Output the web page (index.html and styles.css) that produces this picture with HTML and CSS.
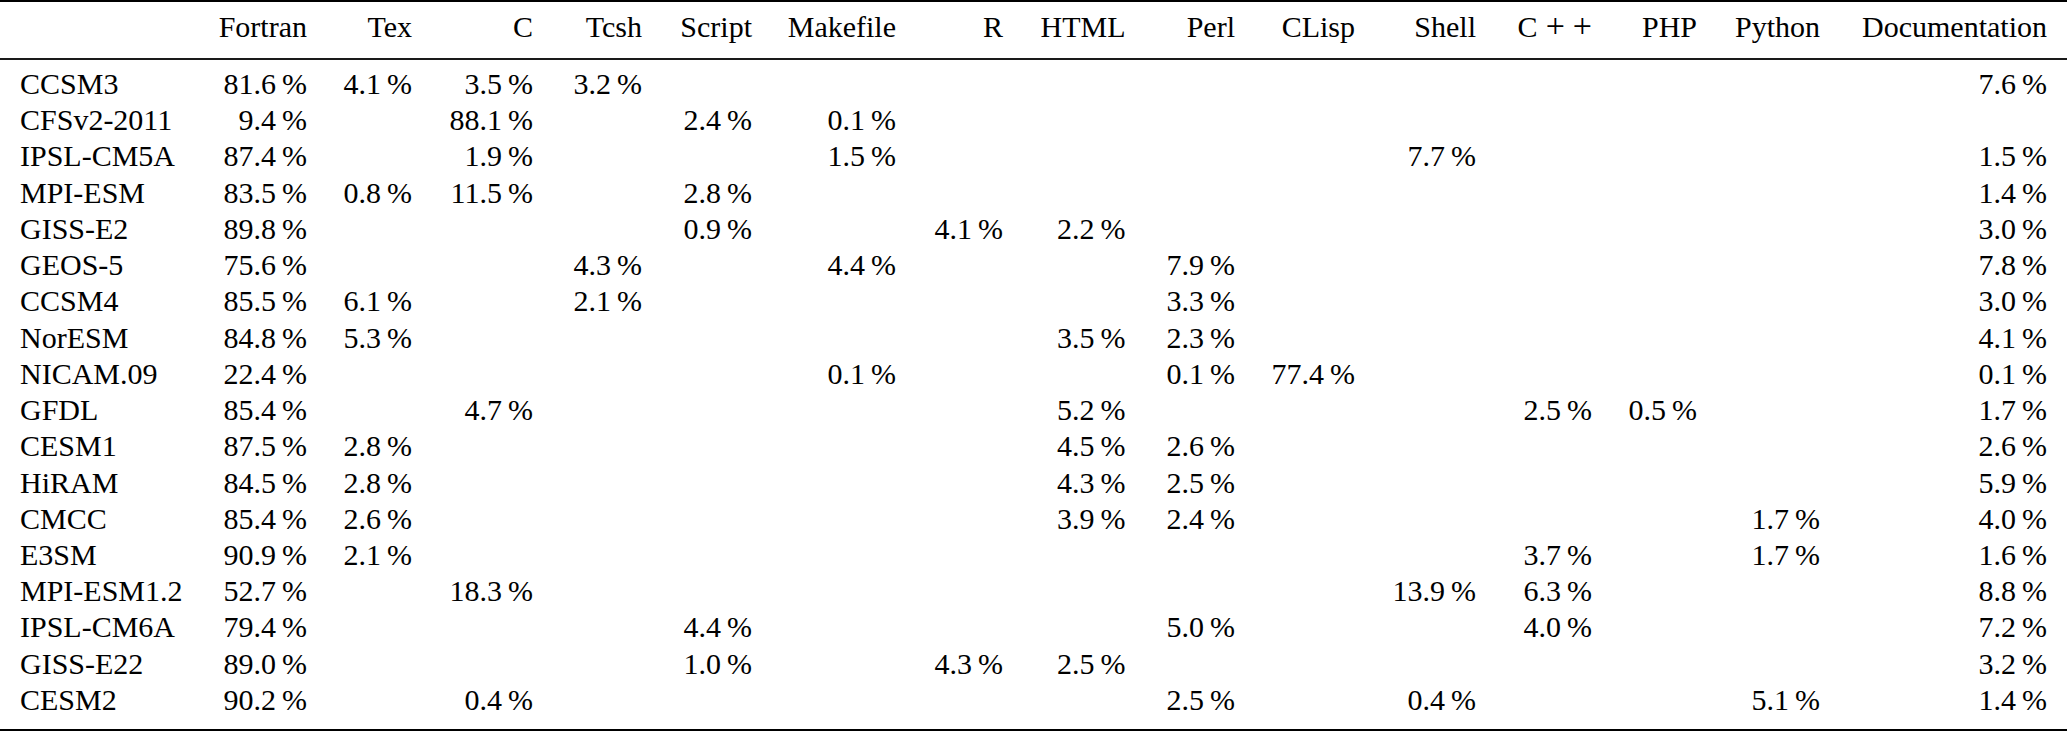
FILE: index.html
```html
<!DOCTYPE html>
<html lang="en">
<head>
<meta charset="utf-8">
<title>Language composition of climate models</title>
<link rel="stylesheet" href="styles.css">
</head>
<body>
<table class="langs">
  <colgroup>
    <col class="w-name">
    <col class="w-fortran">
    <col class="w-tex">
    <col class="w-c">
    <col class="w-tcsh">
    <col class="w-script">
    <col class="w-make">
    <col class="w-r">
    <col class="w-html">
    <col class="w-perl">
    <col class="w-clisp">
    <col class="w-shell">
    <col class="w-cpp">
    <col class="w-php">
    <col class="w-python">
    <col class="w-doc">
  </colgroup>
  <thead>
    <tr>
      <th class="name"></th>
      <th>Fortran</th>
      <th>Tex</th>
      <th>C</th>
      <th>Tcsh</th>
      <th>Script</th>
      <th>Makefile</th>
      <th>R</th>
      <th>HTML</th>
      <th>Perl</th>
      <th>CLisp</th>
      <th>Shell</th>
      <th><span class="cpp">C<span class="plus">+</span><span class="plus">+</span></span></th>
      <th>PHP</th>
      <th>Python</th>
      <th class="last">Documentation</th>
    </tr>
  </thead>
  <tbody>
    <tr><td class="name">CCSM3</td><td>81.6&thinsp;%</td><td>4.1&thinsp;%</td><td>3.5&thinsp;%</td><td>3.2&thinsp;%</td><td></td><td></td><td></td><td></td><td></td><td></td><td></td><td></td><td></td><td></td><td class="last">7.6&thinsp;%</td></tr>
    <tr><td class="name">CFSv2-2011</td><td>9.4&thinsp;%</td><td></td><td>88.1&thinsp;%</td><td></td><td>2.4&thinsp;%</td><td>0.1&thinsp;%</td><td></td><td></td><td></td><td></td><td></td><td></td><td></td><td></td><td class="last"></td></tr>
    <tr><td class="name">IPSL-CM5A</td><td>87.4&thinsp;%</td><td></td><td>1.9&thinsp;%</td><td></td><td></td><td>1.5&thinsp;%</td><td></td><td></td><td></td><td></td><td>7.7&thinsp;%</td><td></td><td></td><td></td><td class="last">1.5&thinsp;%</td></tr>
    <tr><td class="name">MPI-ESM</td><td>83.5&thinsp;%</td><td>0.8&thinsp;%</td><td>11.5&thinsp;%</td><td></td><td>2.8&thinsp;%</td><td></td><td></td><td></td><td></td><td></td><td></td><td></td><td></td><td></td><td class="last">1.4&thinsp;%</td></tr>
    <tr><td class="name">GISS-E2</td><td>89.8&thinsp;%</td><td></td><td></td><td></td><td>0.9&thinsp;%</td><td></td><td>4.1&thinsp;%</td><td>2.2&thinsp;%</td><td></td><td></td><td></td><td></td><td></td><td></td><td class="last">3.0&thinsp;%</td></tr>
    <tr><td class="name">GEOS-5</td><td>75.6&thinsp;%</td><td></td><td></td><td>4.3&thinsp;%</td><td></td><td>4.4&thinsp;%</td><td></td><td></td><td>7.9&thinsp;%</td><td></td><td></td><td></td><td></td><td></td><td class="last">7.8&thinsp;%</td></tr>
    <tr><td class="name">CCSM4</td><td>85.5&thinsp;%</td><td>6.1&thinsp;%</td><td></td><td>2.1&thinsp;%</td><td></td><td></td><td></td><td></td><td>3.3&thinsp;%</td><td></td><td></td><td></td><td></td><td></td><td class="last">3.0&thinsp;%</td></tr>
    <tr><td class="name">NorESM</td><td>84.8&thinsp;%</td><td>5.3&thinsp;%</td><td></td><td></td><td></td><td></td><td></td><td>3.5&thinsp;%</td><td>2.3&thinsp;%</td><td></td><td></td><td></td><td></td><td></td><td class="last">4.1&thinsp;%</td></tr>
    <tr><td class="name">NICAM.09</td><td>22.4&thinsp;%</td><td></td><td></td><td></td><td></td><td>0.1&thinsp;%</td><td></td><td></td><td>0.1&thinsp;%</td><td>77.4&thinsp;%</td><td></td><td></td><td></td><td></td><td class="last">0.1&thinsp;%</td></tr>
    <tr><td class="name">GFDL</td><td>85.4&thinsp;%</td><td></td><td>4.7&thinsp;%</td><td></td><td></td><td></td><td></td><td>5.2&thinsp;%</td><td></td><td></td><td></td><td>2.5&thinsp;%</td><td>0.5&thinsp;%</td><td></td><td class="last">1.7&thinsp;%</td></tr>
    <tr><td class="name">CESM1</td><td>87.5&thinsp;%</td><td>2.8&thinsp;%</td><td></td><td></td><td></td><td></td><td></td><td>4.5&thinsp;%</td><td>2.6&thinsp;%</td><td></td><td></td><td></td><td></td><td></td><td class="last">2.6&thinsp;%</td></tr>
    <tr><td class="name">HiRAM</td><td>84.5&thinsp;%</td><td>2.8&thinsp;%</td><td></td><td></td><td></td><td></td><td></td><td>4.3&thinsp;%</td><td>2.5&thinsp;%</td><td></td><td></td><td></td><td></td><td></td><td class="last">5.9&thinsp;%</td></tr>
    <tr><td class="name">CMCC</td><td>85.4&thinsp;%</td><td>2.6&thinsp;%</td><td></td><td></td><td></td><td></td><td></td><td>3.9&thinsp;%</td><td>2.4&thinsp;%</td><td></td><td></td><td></td><td></td><td>1.7&thinsp;%</td><td class="last">4.0&thinsp;%</td></tr>
    <tr><td class="name">E3SM</td><td>90.9&thinsp;%</td><td>2.1&thinsp;%</td><td></td><td></td><td></td><td></td><td></td><td></td><td></td><td></td><td></td><td>3.7&thinsp;%</td><td></td><td>1.7&thinsp;%</td><td class="last">1.6&thinsp;%</td></tr>
    <tr><td class="name">MPI-ESM1.2</td><td>52.7&thinsp;%</td><td></td><td>18.3&thinsp;%</td><td></td><td></td><td></td><td></td><td></td><td></td><td></td><td>13.9&thinsp;%</td><td>6.3&thinsp;%</td><td></td><td></td><td class="last">8.8&thinsp;%</td></tr>
    <tr><td class="name">IPSL-CM6A</td><td>79.4&thinsp;%</td><td></td><td></td><td></td><td>4.4&thinsp;%</td><td></td><td></td><td></td><td>5.0&thinsp;%</td><td></td><td></td><td>4.0&thinsp;%</td><td></td><td></td><td class="last">7.2&thinsp;%</td></tr>
    <tr><td class="name">GISS-E22</td><td>89.0&thinsp;%</td><td></td><td></td><td></td><td>1.0&thinsp;%</td><td></td><td>4.3&thinsp;%</td><td>2.5&thinsp;%</td><td></td><td></td><td></td><td></td><td></td><td></td><td class="last">3.2&thinsp;%</td></tr>
    <tr><td class="name">CESM2</td><td>90.2&thinsp;%</td><td></td><td>0.4&thinsp;%</td><td></td><td></td><td></td><td></td><td></td><td>2.5&thinsp;%</td><td></td><td>0.4&thinsp;%</td><td></td><td></td><td>5.1&thinsp;%</td><td class="last">1.4&thinsp;%</td></tr>
  </tbody>
</table>
</body>
</html>
```
FILE: styles.css
```css
html, body {
  margin: 0;
  padding: 0;
  background: #ffffff;
}

.langs {
  width: 2067px;
  table-layout: fixed;
  border-collapse: separate;
  border-spacing: 0;
  font-family: "Liberation Serif", "Times New Roman", serif;
  font-size: 30px;
  color: #000000;
}

.w-name   { width: 200px; }
.w-fortran{ width: 125px; }
.w-tex    { width: 105px; }
.w-c      { width: 121px; }
.w-tcsh   { width: 109px; }
.w-script { width: 110px; }
.w-make   { width: 144px; }
.w-r      { width: 107px; }
.w-html   { width: 122.5px; }
.w-perl   { width: 109.5px; }
.w-clisp  { width: 120px; }
.w-shell  { width: 121px; }
.w-cpp    { width: 116px; }
.w-php    { width: 105px; }
.w-python { width: 123px; }
.w-doc    { width: 229px; }

.langs th,
.langs td {
  padding: 0 18px 0 0;
  line-height: 36.24px;
  text-align: right;
  font-weight: normal;
  white-space: nowrap;
  vertical-align: baseline;
}

.langs .name {
  text-align: left;
  padding: 0 0 0 20px;
}

.langs .last {
  padding-right: 20px;
}

.langs thead th {
  border-top: 2px solid #000000;
  border-bottom: 2px solid #1a1a1a;
  padding-top: 5.75px;
  padding-bottom: 13px;
}

.langs tbody tr:first-child td {
  padding-top: 5.95px;
}

.langs tbody tr:last-child td {
  padding-bottom: 10.8px;
  border-bottom: 2px solid #000000;
}

.cpp .plus {
  font-size: 34px;
  margin-left: 8px;
}
```
